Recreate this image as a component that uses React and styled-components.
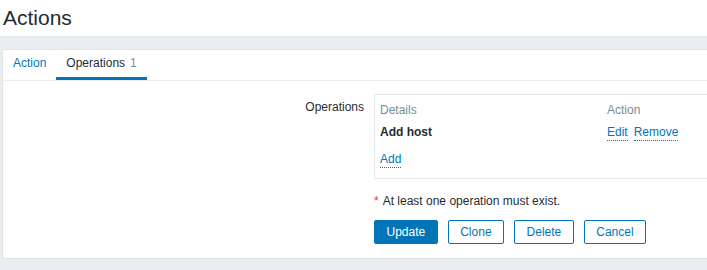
import React from 'react';
import styled, { createGlobalStyle } from 'styled-components';

const GlobalStyle = createGlobalStyle`
  html, body {
    margin: 0;
    padding: 0;
    overflow: hidden;
    background: #ebeef0;
  }
  body {
    font-family: "Liberation Sans", Arial, sans-serif;
    font-size: 12px;
    color: #1f2c33;
  }
`;

const Page = styled.div`
  width: 100%;
  min-height: 270px;
  background: #ebeef0;
`;

const Header = styled.header`
  height: 37px;
  background: #fff;
  border-bottom: 1px solid #e4e8ea;
  padding: 6px 0 0 3px;
  box-sizing: border-box;
`;

const Title = styled.h1`
  margin: 0;
  font-size: 21px;
  line-height: 24px;
  font-weight: normal;
  color: #1f2c33;
`;

const Main = styled.main`
  padding: 12px 0 11px 2px;
`;

const Card = styled.div`
  width: 900px;
  background: #fff;
  border: 1px solid #dfe4e7;
`;

const TabList = styled.ul`
  display: flex;
  margin: 0;
  padding: 0;
  list-style: none;
  border-bottom: 1px solid #ebeef0;
`;

const Tab = styled.li`
  padding: 0 10px;
  line-height: 27px;
  border-bottom: 3px solid ${p => (p.$active ? '#0275b8' : 'transparent')};
  color: ${p => (p.$active ? '#1f2c33' : '#0275b8')};
  cursor: pointer;
`;

const Count = styled.span`
  color: #768d99;
  margin-left: 5px;
`;

const Form = styled.div`
  display: grid;
  grid-template-columns: 361px 1fr;
  column-gap: 10px;
  padding: 13px 0 14px;
`;

const Label = styled.label`
  text-align: right;
  padding-top: 6px;
  line-height: 14px;
`;

const Field = styled.div`
  display: flex;
  flex-direction: column;
`;

const OpsBox = styled.div`
  width: 460px;
  border: 1px solid #e6e9eb;
  padding: 8px 5px 12px;
  line-height: 14px;
`;

const OpsRow = styled.div`
  display: grid;
  grid-template-columns: 227px 1fr;
  margin-top: ${p => p.$gap || 0}px;
`;

const HeadCell = styled.div`
  color: #768d99;
`;

const Bold = styled.div`
  font-weight: bold;
`;

const Links = styled.div`
  display: flex;
  gap: 6px;
`;

const Link = styled.a`
  color: #0275b8;
  text-decoration: none;
  border-bottom: 1px dotted #0275b8;
  padding-bottom: 1px;
  cursor: pointer;
`;

const Error = styled.div`
  margin-top: 15px;
  line-height: 14px;
`;

const Star = styled.span`
  color: #e33734;
  margin-right: 4px;
`;

const Buttons = styled.div`
  display: flex;
  gap: 10px;
  margin-top: 12px;
`;

const Button = styled.button`
  height: 24px;
  padding: 0 11.5px;
  font-family: inherit;
  font-size: 12px;
  line-height: 22px;
  border: 1px solid #0275b8;
  border-radius: 2px;
  background: ${p => (p.$primary ? '#0275b8' : '#fff')};
  color: ${p => (p.$primary ? '#fff' : '#0275b8')};
  cursor: pointer;
`;

export default function App() {
  return (
    <Page>
      <GlobalStyle />
      <Header>
        <Title>Actions</Title>
      </Header>
      <Main>
        <Card>
          <TabList>
            <Tab>Action</Tab>
            <Tab $active>
              Operations<Count>1</Count>
            </Tab>
          </TabList>
          <Form>
            <Label>Operations</Label>
            <Field>
              <OpsBox>
                <OpsRow>
                  <HeadCell>Details</HeadCell>
                  <HeadCell>Action</HeadCell>
                </OpsRow>
                <OpsRow $gap={8}>
                  <Bold>Add host</Bold>
                  <Links>
                    <Link>Edit</Link>
                    <Link>Remove</Link>
                  </Links>
                </OpsRow>
                <OpsRow $gap={11}>
                  <div>
                    <Link>Add</Link>
                  </div>
                </OpsRow>
              </OpsBox>
              <Error>
                <Star>*</Star>At least one operation must exist.
              </Error>
              <Buttons>
                <Button $primary>Update</Button>
                <Button>Clone</Button>
                <Button>Delete</Button>
                <Button>Cancel</Button>
              </Buttons>
            </Field>
          </Form>
        </Card>
      </Main>
    </Page>
  );
}
